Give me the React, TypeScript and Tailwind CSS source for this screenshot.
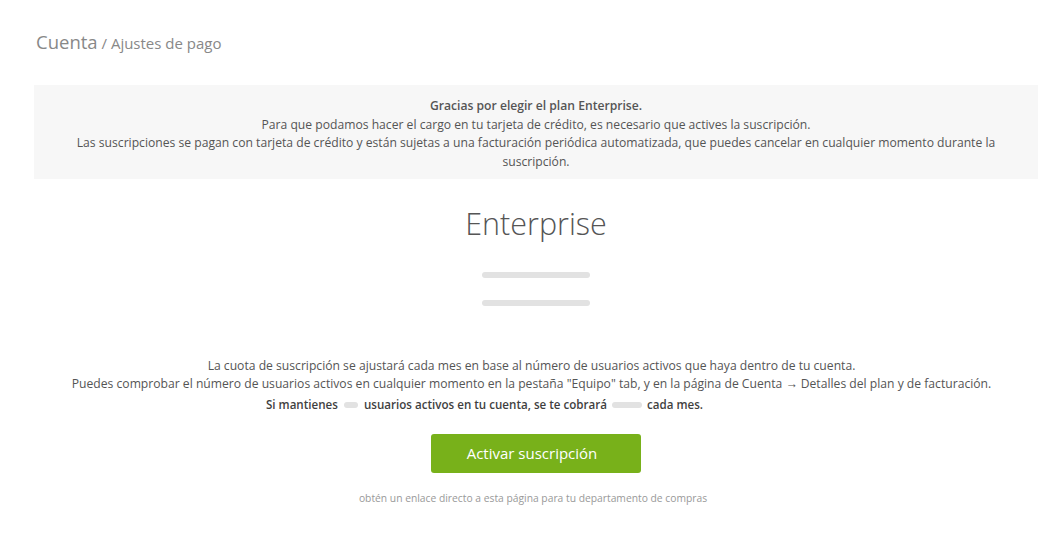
export default function App() {
  return (
    <div
      className="min-h-[537px] bg-white text-[#555]"
      style={{ fontFamily: '"Open Sans", "Liberation Sans", sans-serif' }}
    >
      <div className="pl-[36px] pt-[30px] leading-[24px] text-[#888]">
        <span className="text-[18.5px]">Cuenta</span>
        <span className="text-[15px]"> / Ajustes de pago</span>
      </div>

      <div className="ml-[34px] mr-[25px]">
        <div className="mt-[30px] h-[94px] bg-[#f7f7f7] pt-[12px] text-center text-[12.15px] leading-[18.5px]">
          <p className="font-semibold">Gracias por elegir el plan Enterprise.</p>
          <p>Para que podamos hacer el cargo en tu tarjeta de crédito, es necesario que actives la suscripción.</p>
          <p className="px-[40px]">
            Las suscripciones se pagan con tarjeta de crédito y están sujetas a una facturación periódica automatizada, que puedes cancelar en cualquier momento durante la suscripción.
          </p>
        </div>

        <div className="flex flex-col items-center">
          <h1 className="mt-[24px] text-[30.5px] font-light leading-[40px] text-[#555]">Enterprise</h1>
          <div className="mt-[29px] h-[6px] w-[108px] rounded-full bg-[#e2e2e2]" />
          <div className="mt-[22px] h-[6px] w-[108px] rounded-full bg-[#e2e2e2]" />

          <div className="mr-[9px] mt-[51px] text-center text-[12.15px] leading-[17.5px]">
            <p>La cuota de suscripción se ajustará cada mes en base al número de usuarios activos que haya dentro de tu cuenta.</p>
            <p>
              Puedes comprobar el número de usuarios activos en cualquier momento en la pestaña "Equipo" tab, y en la página de Cuenta → Detalles del plan y de facturación.
            </p>
          </div>
          <p className="mr-[103px] mt-[3px] flex items-center text-[11.6px] font-semibold leading-[20px] text-[#3f3f3f]">
            Si mantienes
            <span className="mx-[6px] inline-block h-[6px] w-[14px] rounded-full bg-[#e2e2e2]" />
            usuarios activos en tu cuenta, se te cobrará
            <span className="mx-[5px] inline-block h-[6px] w-[30px] rounded-full bg-[#e2e2e2]" />
            cada mes.
          </p>

          <button className="mt-[19px] h-[39px] w-[210px] rounded-[3px] bg-[#78b11a] pr-[8px] text-[15px] text-white">
            Activar suscripción
          </button>

          <p className="mr-[6px] mt-[18px] text-[10.3px] leading-[14px] text-[#999]">
            obtén un enlace directo a esta página para tu departamento de compras
          </p>
        </div>
      </div>
    </div>
  );
}
